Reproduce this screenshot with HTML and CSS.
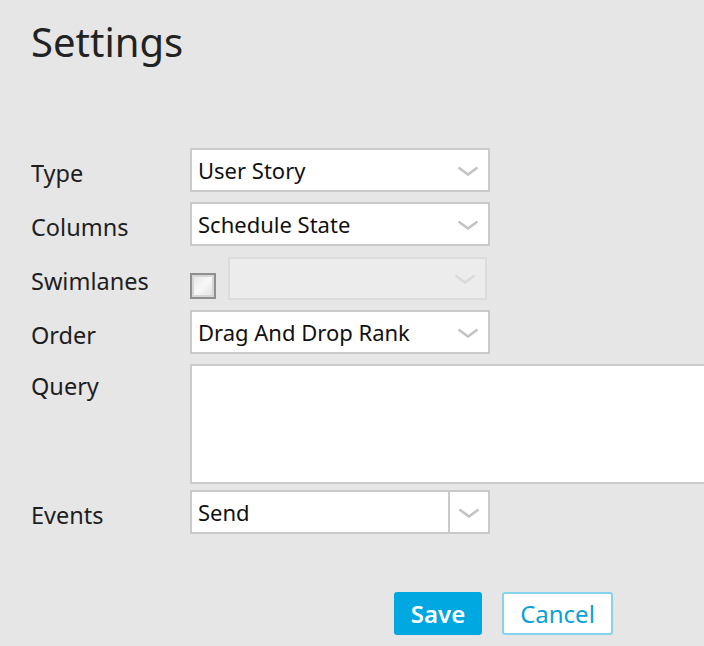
FILE: index.html
```html
<!DOCTYPE html>
<html>
<head>
<meta charset="utf-8">
<link rel="stylesheet" href="styles.css">
</head>
<body>
<div class="page">
  <h1 class="title">Settings</h1>
  <div class="form">
    <div class="label">Type</div>
    <div class="combo">
      <span class="combo-text">User Story</span>
      <span class="trigger"><svg width="22" height="10" viewBox="0 0 22 10"><path d="M1.5 1.5 L11 8.5 L20.5 1.5" fill="none" stroke="#c3c3c3" stroke-width="2.6"/></svg></span>
    </div>

    <div class="label">Columns</div>
    <div class="combo">
      <span class="combo-text">Schedule State</span>
      <span class="trigger"><svg width="22" height="10" viewBox="0 0 22 10"><path d="M1.5 1.5 L11 8.5 L20.5 1.5" fill="none" stroke="#c3c3c3" stroke-width="2.6"/></svg></span>
    </div>

    <div class="label">Swimlanes</div>
    <div class="swim">
      <span class="checkbox"></span>
      <div class="combo combo-disabled">
        <span class="combo-text"></span>
        <span class="trigger"><svg width="22" height="10" viewBox="0 0 22 10"><path d="M1.5 1.5 L11 8.5 L20.5 1.5" fill="none" stroke="#dadada" stroke-width="2.6"/></svg></span>
      </div>
    </div>

    <div class="label">Order</div>
    <div class="combo">
      <span class="combo-text">Drag And Drop Rank</span>
      <span class="trigger"><svg width="22" height="10" viewBox="0 0 22 10"><path d="M1.5 1.5 L11 8.5 L20.5 1.5" fill="none" stroke="#c3c3c3" stroke-width="2.6"/></svg></span>
    </div>

    <div class="label label-query">Query</div>
    <div class="textarea"></div>

    <div class="label label-events">Events</div>
    <div class="combo combo-split">
      <span class="combo-text">Send</span>
      <span class="trigger trigger-split"><svg width="22" height="10" viewBox="0 0 22 10"><path d="M1.5 1.5 L11 8.5 L20.5 1.5" fill="none" stroke="#c3c3c3" stroke-width="2.6"/></svg></span>
    </div>
  </div>
  <div class="buttons">
    <button class="btn btn-save">Save</button>
    <button class="btn btn-cancel">Cancel</button>
  </div>
</div>
</body>
</html>
```

FILE: styles.css
```css
html, body {
  margin: 0;
  padding: 0;
  background: #e6e6e6;
  overflow: hidden;
}
body {
  width: 704px;
  height: 646px;
  font-family: "Noto Sans", "Open Sans", sans-serif;
  color: #1e1e1e;
}
.page {
  padding-left: 31px;
}
.title {
  margin: 22px 0 0;
  font-size: 40px;
  line-height: 40px;
  font-weight: 400;
  color: #222;
}
.form {
  margin-top: 86px;
  display: grid;
  grid-template-columns: 159px 300px;
  row-gap: 10px;
}
.label {
  font-size: 23.5px;
  line-height: 44px;
  padding-top: 3px;
  height: 41px;
  white-space: nowrap;
}
.label-query {
  padding-top: 0;
}
.label-events {
  margin-top: -3px;
  padding-top: 6px;
}
.combo {
  box-sizing: border-box;
  height: 44px;
  border: 2px solid #cacaca;
  background: #fff;
  display: flex;
  align-items: center;
}
.combo-text {
  flex: 1;
  padding-left: 6px;
  font-size: 22px;
  line-height: 40px;
  color: #111;
  white-space: nowrap;
}
.trigger {
  width: 40px;
  height: 40px;
  display: flex;
  align-items: center;
  justify-content: center;
  padding-top: 1px;
  box-sizing: border-box;
}
.trigger-split {
  border-left: 2px solid #cacaca;
  width: 40px;
}
.swim {
  display: flex;
  align-items: center;
  gap: 12px;
  height: 44px;
}
.checkbox {
  box-sizing: border-box;
  width: 26px;
  height: 26px;
  margin-top: 16px;
  border: 2px solid #8f8f8f;
  background: linear-gradient(135deg, #e4e4e4 0%, #f8f8f8 50%, #dedede 100%);
  box-shadow: inset 0 0 0 2px #d6d6d6;
}
.combo-disabled {
  width: 259px;
  height: 43px;
  background: #ececec;
  border-color: #dcdcdc;
}
.textarea {
  box-sizing: border-box;
  width: 560px;
  height: 120px;
  border: 2px solid #cacaca;
  background: #fff;
  margin-bottom: -4px;
}
.combo-split {
  margin-top: 0;
}
.buttons {
  margin-top: 58px;
  margin-left: 363px;
  display: flex;
  gap: 20px;
}
.btn {
  box-sizing: border-box;
  height: 43px;
  border-radius: 3px;
  font-family: "Noto Sans", "Open Sans", sans-serif;
  font-size: 24px;
  line-height: 39px;
  padding: 0;
  cursor: pointer;
}
.btn-save {
  width: 88px;
  background: #00a8e1;
  border: 2px solid #00a8e1;
  color: #fff;
  font-weight: 600;
}
.btn-cancel {
  width: 111px;
  background: #fff;
  border: 2px solid #86d3ef;
  color: #0aa0d8;
  font-weight: 400;
}
```
